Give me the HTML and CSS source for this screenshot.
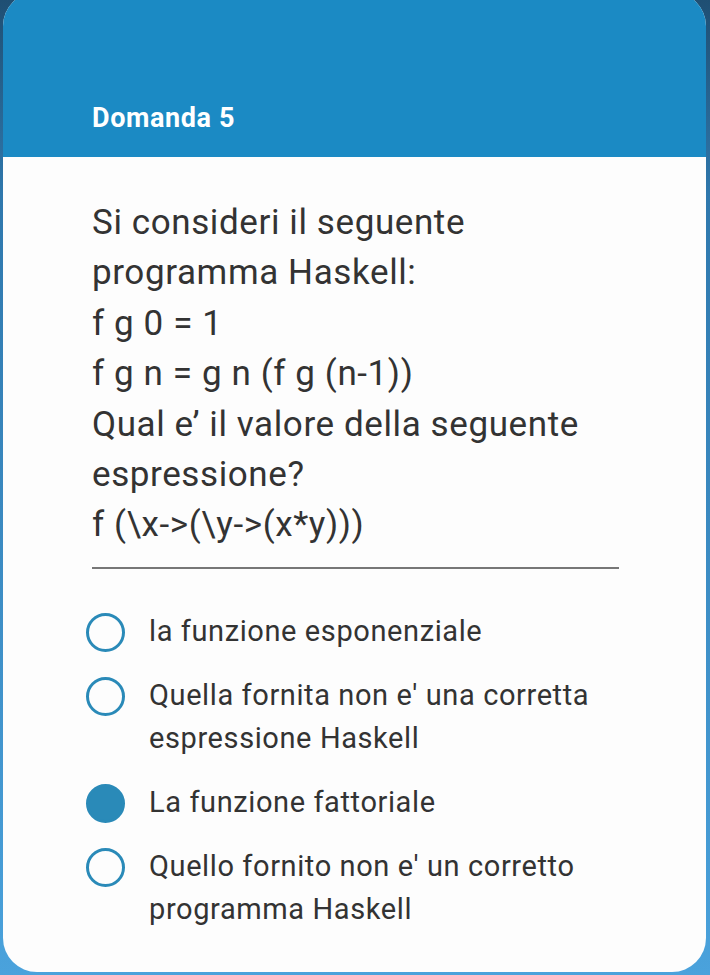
FILE: index.html
```html
<!DOCTYPE html>
<html lang="it">
<head>
<meta charset="utf-8">
<link rel="stylesheet" href="styles.css">
</head>
<body>
<div class="card">
  <div class="header">
    <div class="title">Domanda 5</div>
  </div>
  <div class="content">
    <div class="question">
      <div>Si consideri il seguente programma Haskell:</div>
      <div>f g 0 = 1</div>
      <div>f g n = g n (f g (n-1))</div>
      <div>Qual e’ il valore della seguente espressione?</div>
      <div>f (\x-&gt;(\y-&gt;(x*y)))</div>
    </div>
    <div class="divider"></div>
    <div class="options">
      <div class="option"><span class="radio"></span><span class="label">la funzione esponenziale</span></div>
      <div class="option"><span class="radio"></span><span class="label">Quella fornita non e' una corretta espressione Haskell</span></div>
      <div class="option"><span class="radio checked"></span><span class="label">La funzione fattoriale</span></div>
      <div class="option"><span class="radio"></span><span class="label">Quello fornito non e' un corretto programma Haskell</span></div>
    </div>
  </div>
</div>
</body>
</html>
```
FILE: styles.css
```css
html, body {
  margin: 0;
  padding: 0;
}
body {
  width: 710px;
  height: 975px;
  overflow: hidden;
  background: linear-gradient(180deg, #1f4f73 0%, #2f78ad 20%, #4aa2dc 100%);
  font-family: Roboto, "Noto Sans", sans-serif;
}
.card {
  margin: -8px 4px 0 3px;
  height: 980px;
  border-radius: 34px;
  overflow: hidden;
  background: #fdfdfd;
  display: flex;
  flex-direction: column;
}
.header {
  background: #1b8ac4;
  height: 165px;
  box-sizing: border-box;
  padding: 111px 0 0 89px;
  flex: none;
}
.title {
  color: #ffffff;
  font-weight: 700;
  font-size: 27px;
  line-height: 30px;
  letter-spacing: 0.6px;
}
.content {
  padding: 41px 80px 0 89px;
}
.question {
  color: #333333;
  font-size: 35px;
  line-height: 50.4px;
  letter-spacing: 0.6px;
  padding-right: 20px;
}
.divider {
  height: 2px;
  background: #777777;
  margin: 16px 7px 0 0;
}
.options {
  margin-top: 42px;
  margin-left: -6px;
  display: flex;
  flex-direction: column;
  gap: 22px;
}
.option {
  display: flex;
  align-items: flex-start;
  gap: 24px;
}
.radio {
  flex: none;
  width: 33px;
  height: 33px;
  border: 3.5px solid #2a8ab8;
  border-radius: 50%;
  margin-top: 2px;
  box-sizing: content-box;
}
.radio.checked {
  background: #2a8ab8;
}
.label {
  color: #333333;
  font-size: 29px;
  line-height: 43px;
  letter-spacing: 0.6px;
  margin-top: -1px;
}
```
